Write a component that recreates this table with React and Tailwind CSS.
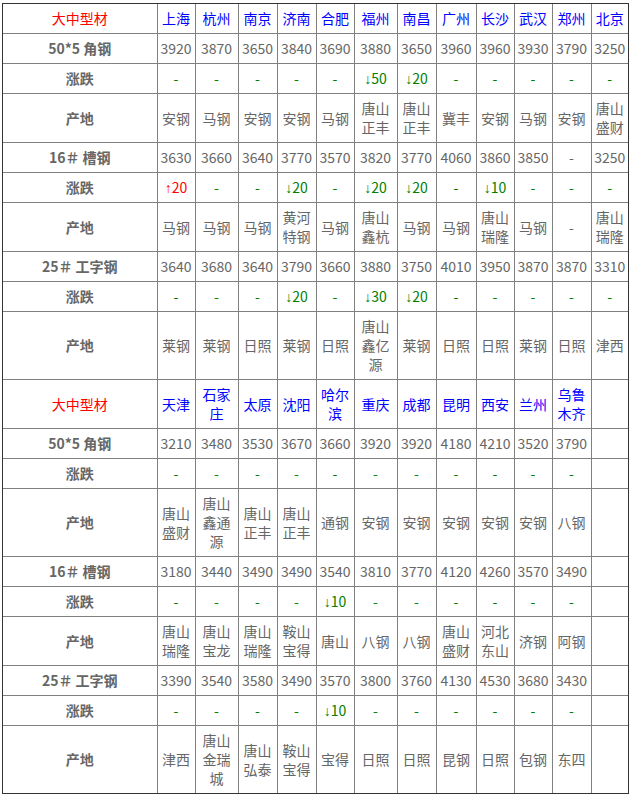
const widths = [154, 38, 43, 39, 39, 38, 43, 39, 40, 38, 38, 39, 37];

const sections = [
  {
    cities: ["上海", "杭州", "南京", "济南", "合肥", "福州", "南昌", "广州", "长沙", "武汉", "郑州", "北京"],
    rows: [
      { label: "50*5 角钢", kind: "price", cells: ["3920", "3870", "3650", "3840", "3690", "3880", "3650", "3960", "3960", "3930", "3790", "3250"] },
      { label: "涨跌", kind: "change", cells: ["-", "-", "-", "-", "-", "↓50", "↓20", "-", "-", "-", "-", "-"] },
      { label: "产地", kind: "origin", cells: ["安钢", "马钢", "安钢", "安钢", "马钢", "唐山正丰", "唐山正丰", "冀丰", "安钢", "马钢", "安钢", "唐山盛财"] },
      { label: "16＃ 槽钢", kind: "price", cells: ["3630", "3660", "3640", "3770", "3570", "3820", "3770", "4060", "3860", "3850", "-", "3250"] },
      { label: "涨跌", kind: "change", cells: ["↑20", "-", "-", "↓20", "-", "↓20", "↓20", "-", "↓10", "-", "-", "-"] },
      { label: "产地", kind: "origin", cells: ["马钢", "马钢", "马钢", "黄河特钢", "马钢", "唐山鑫杭", "马钢", "马钢", "唐山瑞隆", "马钢", "-", "唐山瑞隆"] },
      { label: "25＃ 工字钢", kind: "price", cells: ["3640", "3680", "3640", "3790", "3660", "3880", "3750", "4010", "3950", "3870", "3870", "3310"] },
      { label: "涨跌", kind: "change", cells: ["-", "-", "-", "↓20", "-", "↓30", "↓20", "-", "-", "-", "-", "-"] },
      { label: "产地", kind: "origin", cells: ["莱钢", "莱钢", "日照", "莱钢", "日照", "唐山鑫亿源", "莱钢", "日照", "日照", "莱钢", "日照", "津西"] },
    ],
  },
  {
    cities: ["天津", "石家庄", "太原", "沈阳", "哈尔滨", "重庆", "成都", "昆明", "西安", "兰州", "乌鲁木齐", ""],
    rows: [
      { label: "50*5 角钢", kind: "price", cells: ["3210", "3480", "3530", "3670", "3660", "3920", "3920", "4180", "4210", "3520", "3790", ""] },
      { label: "涨跌", kind: "change", cells: ["-", "-", "-", "-", "-", "-", "-", "-", "-", "-", "-", ""] },
      { label: "产地", kind: "origin", cells: ["唐山盛财", "唐山鑫通源", "唐山正丰", "唐山正丰", "通钢", "安钢", "安钢", "安钢", "安钢", "安钢", "八钢", ""] },
      { label: "16＃ 槽钢", kind: "price", cells: ["3180", "3440", "3490", "3490", "3540", "3810", "3770", "4120", "4260", "3570", "3490", ""] },
      { label: "涨跌", kind: "change", cells: ["-", "-", "-", "-", "↓10", "-", "-", "-", "-", "-", "-", ""] },
      { label: "产地", kind: "origin", cells: ["唐山瑞隆", "唐山宝龙", "唐山瑞隆", "鞍山宝得", "唐山", "八钢", "八钢", "唐山盛财", "河北东山", "济钢", "阿钢", ""] },
      { label: "25＃ 工字钢", kind: "price", cells: ["3390", "3540", "3580", "3490", "3570", "3800", "3760", "4130", "4530", "3680", "3430", ""] },
      { label: "涨跌", kind: "change", cells: ["-", "-", "-", "-", "↓10", "-", "-", "-", "-", "-", "-", ""] },
      { label: "产地", kind: "origin", cells: ["津西", "唐山金瑞城", "唐山弘泰", "鞍山宝得", "宝得", "日照", "日照", "昆钢", "日照", "包钢", "东四", ""] },
    ],
  },
];

function cellColor(kind, value) {
  if (kind !== "change") return "text-[#666]";
  if (value.startsWith("↑")) return "text-[#ff0000]";
  return "text-[#008000]";
}

// arrows look narrow in the shot, the CJK font draws them too wide
function Value({ v }) {
  if (v.startsWith("↑") || v.startsWith("↓")) {
    return (
      <>
        <span className="font-['Liberation_Sans'] leading-none">{v[0]}</span>
        {v.slice(1)}
      </>
    );
  }
  return v;
}

const td = "border border-[#808080] px-[1px] py-[5px] text-center align-middle";

export default function App() {
  return (
    <div className="bg-white min-h-screen pt-[3px] pl-[2px]" style={{ fontFamily: '"Noto Sans CJK SC", "Noto Sans", sans-serif' }}>
      <div className="w-[627px] border border-[#333]">
        <table className="w-[625px] table-fixed border-collapse border-hidden text-[14px] leading-[19px]">
          <colgroup>
            {widths.map((w, i) => (
              <col key={i} style={{ width: w }} />
            ))}
          </colgroup>
          <tbody>
            {sections.map((s, si) => [
              <tr key={`h${si}`}>
                <td className={`${td} text-[#ff0000]`}>大中型材</td>
                {s.cities.map((c, i) => (
                  <td key={i} className={`${td} text-[#0000ff]`}>{c}</td>
                ))}
              </tr>,
              ...s.rows.map((r, ri) => (
                <tr key={`r${si}-${ri}`}>
                  <td className={`${td} font-bold text-[#666]`}>{r.label}</td>
                  {r.cells.map((v, i) => (
                    <td key={i} className={`${td} ${cellColor(r.kind, v)}`}>
                      <Value v={v} />
                    </td>
                  ))}
                </tr>
              )),
            ])}
          </tbody>
        </table>
      </div>
    </div>
  );
}
